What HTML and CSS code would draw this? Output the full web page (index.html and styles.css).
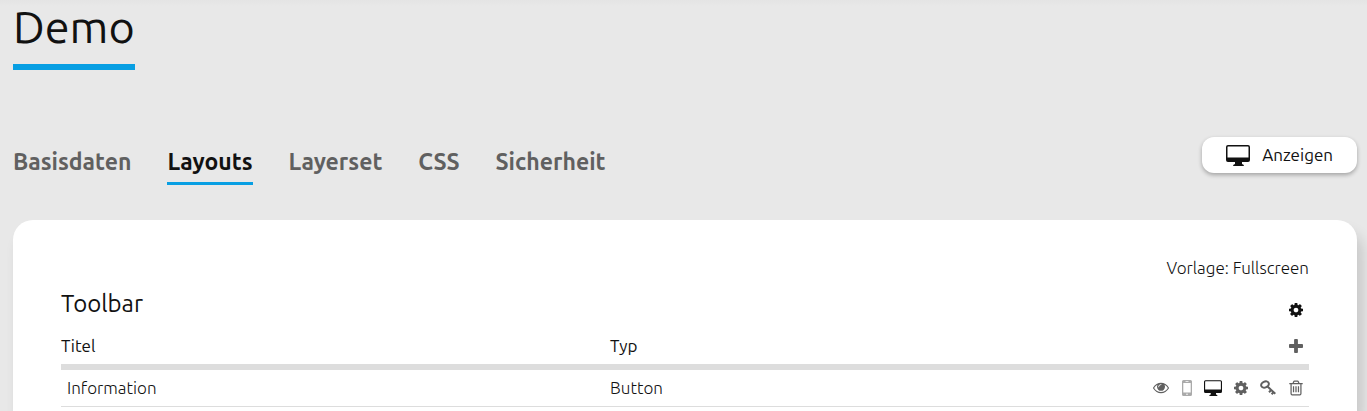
FILE: index.html
```html
<!DOCTYPE html>
<html lang="de">
<head>
<meta charset="utf-8">
<title>Demo</title>
<link rel="stylesheet" href="styles.css">
</head>
<body>
<svg class="sprite" aria-hidden="true">
  <symbol id="cog" viewBox="128 128 1536 1536"><path d="M1152 896q0-106-75-181t-181-75-181 75-75 181 75 181 181 75 181-75 75-181zm512-109v222q0 12-8 23t-20 13l-185 28q-19 54-39 91 35 50 107 138 10 12 10 25t-9 23q-27 37-99 108t-94 71q-12 0-26-9l-138-108q-44 23-91 38-16 136-29 186-7 28-36 28h-222q-14 0-24.5-8.5t-11.5-21.5l-28-184q-49-16-90-37l-141 107q-10 9-25 9-14 0-25-11-126-114-165-168-7-10-7-23 0-12 8-23 15-21 51-66.5t54-70.5q-27-50-41-99l-183-27q-13-2-21-12.5t-8-23.5v-222q0-12 8-23t19-13l186-28q14-46 39-92-40-57-107-138-10-12-10-24 0-10 9-23 26-36 98.5-107.5t94.5-71.5q13 0 26 10l138 107q44-23 91-38 16-136 29-186 7-28 36-28h222q14 0 24.5 8.5t11.5 21.5l28 184q49 16 90 37l142-107q9-9 24-9 13 0 25 10 129 119 165 170 7 8 7 22 0 12-8 23-15 21-51 66.5t-54 70.5q26 50 41 98l183 28q13 2 21 12.5t8 23.5z"/></symbol>
  <symbol id="desktop" viewBox="0 0 24 21"><path fill-rule="evenodd" d="M2 0h20a2 2 0 0 1 2 2v13a2 2 0 0 1-2 2h-6v2q2 .3 2 2H7q0-1.700 2-2v-2H2a2 2 0 0 1-2-2V2a2 2 0 0 1 2-2zM1.500 2v10.500h21V2q0-.5-.5-.5H2q-.5 0-.5.5z"/></symbol>
</svg>
<header class="page-header"><h1 class="title">Demo</h1></header>
<div class="bar">
  <nav class="tabs">
    <a class="tab" href="#basisdaten">Basisdaten</a>
    <a class="tab tab-active" href="#layouts" aria-current="page">Layouts</a>
    <a class="tab" href="#layerset">Layerset</a>
    <a class="tab" href="#css">CSS</a>
    <a class="tab" href="#sicherheit">Sicherheit</a>
  </nav>
  <button class="show" type="button"><svg class="show-icon" aria-hidden="true"><use href="#desktop"/></svg>Anzeigen</button>
</div>
<main class="card">
  <p class="template">Vorlage: Fullscreen</p>
  <div class="section-head">
    <h2 class="section-title">Toolbar</h2>
    <button class="icon-btn dark" type="button" aria-label="Einstellungen"><svg class="i14"><use href="#cog"/></svg></button>
  </div>
  <table class="elements">
    <thead>
      <tr>
        <th class="col-title" scope="col">Titel</th>
        <th scope="col">Typ</th>
        <th class="col-tools"><div class="tools"><button class="icon-btn add" type="button" aria-label="Hinzufügen"><svg class="i14" viewBox="192 128 1408 1408"><path d="M1600 736v192q0 40-28 68t-68 28h-416v416q0 40-28 68t-68 28h-192q-40 0-68-28t-28-68v-416h-416q-40 0-68-28t-28-68v-192q0-40 28-68t68-28h416v-416q0-40 28-68t68-28h192q40 0 68 28t28 68v416h416q40 0 68 28t28 68z"/></svg></button></div></th>
      </tr>
    </thead>
    <tbody>
      <tr>
        <td class="name">Information</td>
        <td>Button</td>
        <td class="col-tools"><div class="tools">
          <button class="icon-btn" type="button" aria-label="Sichtbarkeit"><svg class="i18" viewBox="0 64 1792 1792"><path d="M1664 960q-152-236-381-353 61 104 61 225 0 185-131.500 316.500t-316.500 131.500-316.500-131.500-131.500-316.500q0-121 61-225-229 117-381 353 133 205 333.500 326.500t434.500 121.500 434.500-121.500 333.500-326.500zm-720-384q0-20-14-34t-34-14q-125 0-214.500 89.500t-89.500 214.500q0 20 14 34t34 14 34-14 14-34q0-86 61-147t147-61q20 0 34-14t14-34zm848 384q0 34-20 69-140 230-376.500 368.500t-499.500 138.500-499.500-139-376.500-368q-20-35-20-69t20-69q140-229 376.500-368t499.500-139 499.500 139 376.500 368q20 35 20 69z"/></svg></button>
          <button class="icon-btn faded" type="button" aria-label="Mobil"><svg class="phone" viewBox="0 0 10 16"><path fill-rule="evenodd" d="M1.500 0h7A1.500 1.500 0 0 1 10 1.500v13A1.500 1.500 0 0 1 8.500 16h-7A1.500 1.500 0 0 1 0 14.500v-13A1.500 1.500 0 0 1 1.500 0zM1.300 3v9.500h7.400V3zM3.500 1.300v.6h3v-.6zM5 13.500a.8.8 0 1 0 0 1.600.8.8 0 0 0 0-1.600z"/></svg></button>
          <button class="icon-btn dark" type="button" aria-label="Desktop"><svg class="i18"><use href="#desktop"/></svg></button>
          <button class="icon-btn" type="button" aria-label="Bearbeiten"><svg class="i14"><use href="#cog"/></svg></button>
          <button class="icon-btn" type="button" aria-label="Rechte"><svg class="i16" viewBox="0 0 16 16"><g fill="none" stroke="currentColor" stroke-width="2"><ellipse cx="5" cy="4.500" rx="4" ry="2.900" transform="rotate(-25 5 4.500)"/><path d="M7.500 6.500l7.800 7.300M11.200 10l-2.200 2.300M13.500 12.200l-1.900 2"/></g></svg></button>
          <button class="icon-btn" type="button" aria-label="Löschen"><svg class="i16" viewBox="64 64 1664 1664"><path d="M704 736v576q0 14-9 23t-23 9h-64q-14 0-23-9t-9-23v-576q0-14 9-23t23-9h64q14 0 23 9t9 23zm256 0v576q0 14-9 23t-23 9h-64q-14 0-23-9t-9-23v-576q0-14 9-23t23-9h64q14 0 23 9t9 23zm256 0v576q0 14-9 23t-23 9h-64q-14 0-23-9t-9-23v-576q0-14 9-23t23-9h64q14 0 23 9t9 23zm128 724v-948h-896v948q0 22 7 40.500t14.500 27 10.500 8.500h832q3 0 10.500-8.500t14.500-27 7-40.500zm-672-1076h448l-48-117q-7-9-17-11h-317q-10 2-17 11zm928 32v64q0 14-9 23t-23 9h-96v948q0 83-47 143.500t-113 60.500h-832q-66 0-113-58.500t-47-141.500v-952h-96q-14 0-23-9t-9-23v-64q0-14 9-23t23-9h309l70-167q15-37 54-63t79-26h320q40 0 79 26t54 63l70 167h309q14 0 23 9t9 23z"/></svg></button>
        </div></td>
      </tr>
    </tbody>
  </table>
</main>
</body>
</html>
```
FILE: styles.css
```css
* { box-sizing: border-box; }
body {
  margin: 0;
  padding: 0 10px 0 13px;
  min-height: 100vh;
  display: flex;
  flex-direction: column;
  background: #e8e8e8 linear-gradient(#e4e4e4, #e8e8e8) top / 100% 6px no-repeat;
  color: #111;
  font: 17px/24px Ubuntu, "Open Sans", "Noto Sans", sans-serif;
}
h1, h2, p { margin: 0; font-weight: 400; }
svg { display: block; fill: currentColor; }
.sprite { display: none; }
.page-header { display: flex; }
.title {
  height: 70px;
  font-size: 45px;
  line-height: 54px;
  border-bottom: 6px solid #089fe3;
}
.bar {
  display: flex;
  justify-content: space-between;
  align-items: flex-start;
  margin-top: 67px;
}
.tabs { display: flex; gap: 36px; padding-top: 9px; }
.tab {
  height: 39px;
  color: #606060;
  font-size: 23px;
  font-weight: 700;
  line-height: 32px;
  text-decoration: none;
}
.tab-active { color: #111; border-bottom: 3px solid #089fe3; }
.show {
  display: flex;
  align-items: center;
  gap: 12px;
  height: 36px;
  padding: 0 24px;
  border: 0;
  border-radius: 12px;
  background: #fff;
  box-shadow: 0 2px 4px rgba(0, 0, 0, .3);
  color: #111;
  font: inherit;
}
.show-icon { width: 24px; height: 21px; }
.card {
  flex: 1;
  margin-top: 35px;
  padding: 36px 48px 0;
  border-radius: 20px 20px 0 0;
  background: #fff;
  box-shadow: 6px 12px 14px rgba(0, 0, 0, .14);
}
.template { text-align: right; font-weight: 300; }
.section-head { display: flex; justify-content: space-between; height: 48px; padding-right: 6px; }
.section-title { font-size: 24px; line-height: 48px; }
.section-head .icon-btn { margin-top: 11px; }
.elements { width: 100%; border-collapse: separate; border-spacing: 0; table-layout: fixed; }
th, td { padding: 0; text-align: left; }
th { height: 42px; border-bottom: 6px solid #ddd; font-weight: 400; }
td { height: 37px; border-bottom: 1px solid #ddd; font-weight: 300; }
.col-title { width: 44%; }
th.col-tools, td.col-tools { padding-right: 5px; }
td.name { padding-left: 6px; }
.tools { display: flex; justify-content: flex-end; align-items: center; gap: 12px; }
.icon-btn {
  display: flex;
  align-items: center;
  justify-content: center;
  padding: 0;
  border: 0;
  background: none;
  color: #606060;
}
.add { padding-right: 1px; }
.dark { color: #111; }
.faded { color: #aaa; }
.i14 { width: 14px; height: 14px; }
.i16 { width: 16px; height: 16px; }
.i18 { width: 18px; height: 16px; }
.phone { width: 10px; height: 16px; }
```
